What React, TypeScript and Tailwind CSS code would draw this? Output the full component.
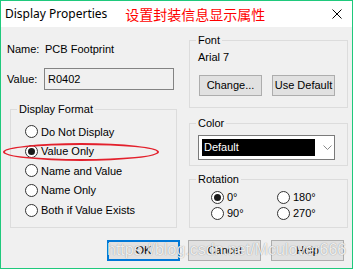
function Radio({ checked, label }: { checked?: boolean; label: string }) {
  return (
    <div className="flex items-center h-full">
      <span className="w-[13px] h-[13px] rounded-full border border-[#333333] bg-white flex items-center justify-center shrink-0">
        {checked && <span className="w-[7px] h-[7px] rounded-full bg-[#1a1a1a]" />}
      </span>
      <span className="ml-[3px] whitespace-nowrap">{label}</span>
    </div>
  );
}

function Group({ title, className, children }: { title: string; className: string; children?: React.ReactNode }) {
  return (
    <fieldset className={`border border-[#dcdcdc] ${className}`}>
      <legend className="ml-[6px] px-[2px] leading-[14px]">{title}</legend>
      {children}
    </fieldset>
  );
}

function Btn({ label, className }: { label: string; className: string }) {
  return (
    <div className={`h-[21px] bg-[#e1e1e1] flex items-center justify-center ${className}`}>{label}</div>
  );
}

export default function App() {
  return (
    <div className="relative w-[353px] h-[269px] border border-[#1fc97c] bg-[#f0f0f0] text-[11px] text-black font-['Liberation_Sans',Arial,sans-serif] overflow-hidden">
      {/* title bar */}
      <div className="h-[26px] bg-white flex items-center">
        <span className="ml-[4px] text-[12px] font-['Noto_Sans',sans-serif]">Display Properties</span>
        <span className="ml-[18px] text-[14px] text-[#ff0000] font-['Noto_Sans_CJK_SC',sans-serif]">设置封装信息显示属性</span>
        <svg className="ml-auto mr-[10px]" width="10" height="10" viewBox="0 0 10 10">
          <path d="M0.5 0.5L9.5 9.5M9.5 0.5L0.5 9.5" stroke="#000" strokeWidth="1" />
        </svg>
      </div>

      <div className="flex">
        {/* left column */}
        <div className="w-[176px] pl-[6px]">
          <div className="mt-[15px] h-[14px] leading-[14px] flex">
            <span className="w-[38px]">Name:</span>
            <span>PCB Footprint</span>
          </div>
          <div className="mt-[12px] h-[22px] flex items-center">
            <span className="w-[37px]">Value:</span>
            <div className="w-[130px] h-[22px] border border-[#838383] bg-[#f0f0f0] pl-[3px] flex items-center">R0402</div>
          </div>
          <Group title="Display Format" className="mt-[12px] ml-[3px] w-[167px] h-[126px]">
            <div className="pl-[14px] pt-[6px]">
              <div className="h-[19.6px]"><Radio label="Do Not Display" /></div>
              <div className="h-[19.6px]"><Radio checked label="Value Only" /></div>
              <div className="h-[19.6px]"><Radio label="Name and Value" /></div>
              <div className="h-[19.6px]"><Radio label="Name Only" /></div>
              <div className="h-[19.6px]"><Radio label="Both if Value Exists" /></div>
            </div>
          </Group>
        </div>

        {/* right column */}
        <div className="ml-[12px] w-[159px]">
          <Group title="Font" className="mt-[6px] w-[159px] h-[75px]">
            <div className="pl-[8px] mt-[3px] leading-[14px]">Arial 7</div>
            <div className="flex mt-[11px] pl-[9px]">
              <Btn label="Change..." className="w-[63px] border border-[#adadad]" />
              <Btn label="Use Default" className="ml-[10px] w-[63px] border border-[#adadad]" />
            </div>
          </Group>
          <Group title="Color" className="mt-[8px] w-[159px] h-[50px]">
            <div className="ml-[8px] mt-[5px] w-[137px] h-[25px] border border-[#7a7a7a] bg-white flex items-center pl-[3px]">
              <div className="w-[113px] h-[17px] bg-black text-white pl-[2px] leading-[17px]">Default</div>
              <svg className="ml-[8px]" width="9" height="5" viewBox="0 0 9 5">
                <path d="M0.5 0.5L4.5 4.5L8.5 0.5" stroke="#8a8a8a" fill="none" strokeWidth="1" />
              </svg>
            </div>
          </Group>
          <Group title="Rotation" className="mt-[6px] w-[159px] h-[56px]">
            <div className="pl-[21px] mt-[3px] grid grid-cols-[66px_1fr]">
              <div className="h-[16px]"><Radio checked label="0°" /></div>
              <div className="h-[16px]"><Radio label="180°" /></div>
              <div className="h-[16px]"><Radio label="90°" /></div>
              <div className="h-[16px]"><Radio label="270°" /></div>
            </div>
          </Group>
        </div>
      </div>

      {/* buttons */}
      <div className="flex mt-[12px] pl-[106px]">
        <Btn label="OK" className="w-[73px] border-2 border-[#0078d7]" />
        <Btn label="Cancel" className="ml-[8px] w-[73px] border border-[#adadad]" />
        <Btn label="Help" className="ml-[10px] w-[73px] border border-[#adadad]" />
      </div>

      {/* annotation + watermark overlays */}
      <div className="absolute left-[2px] top-[142px] w-[156px] h-[18px] rounded-[50%] border-2 border-[#e3202c]" />
      <div className="absolute left-[106px] top-[239px] text-[16px] leading-[20px] text-white/85 whitespace-nowrap [text-shadow:0_0_1px_rgba(0,0,0,0.45)]">
        https://blog.csdn.net/Mculover666
      </div>
    </div>
  );
}
